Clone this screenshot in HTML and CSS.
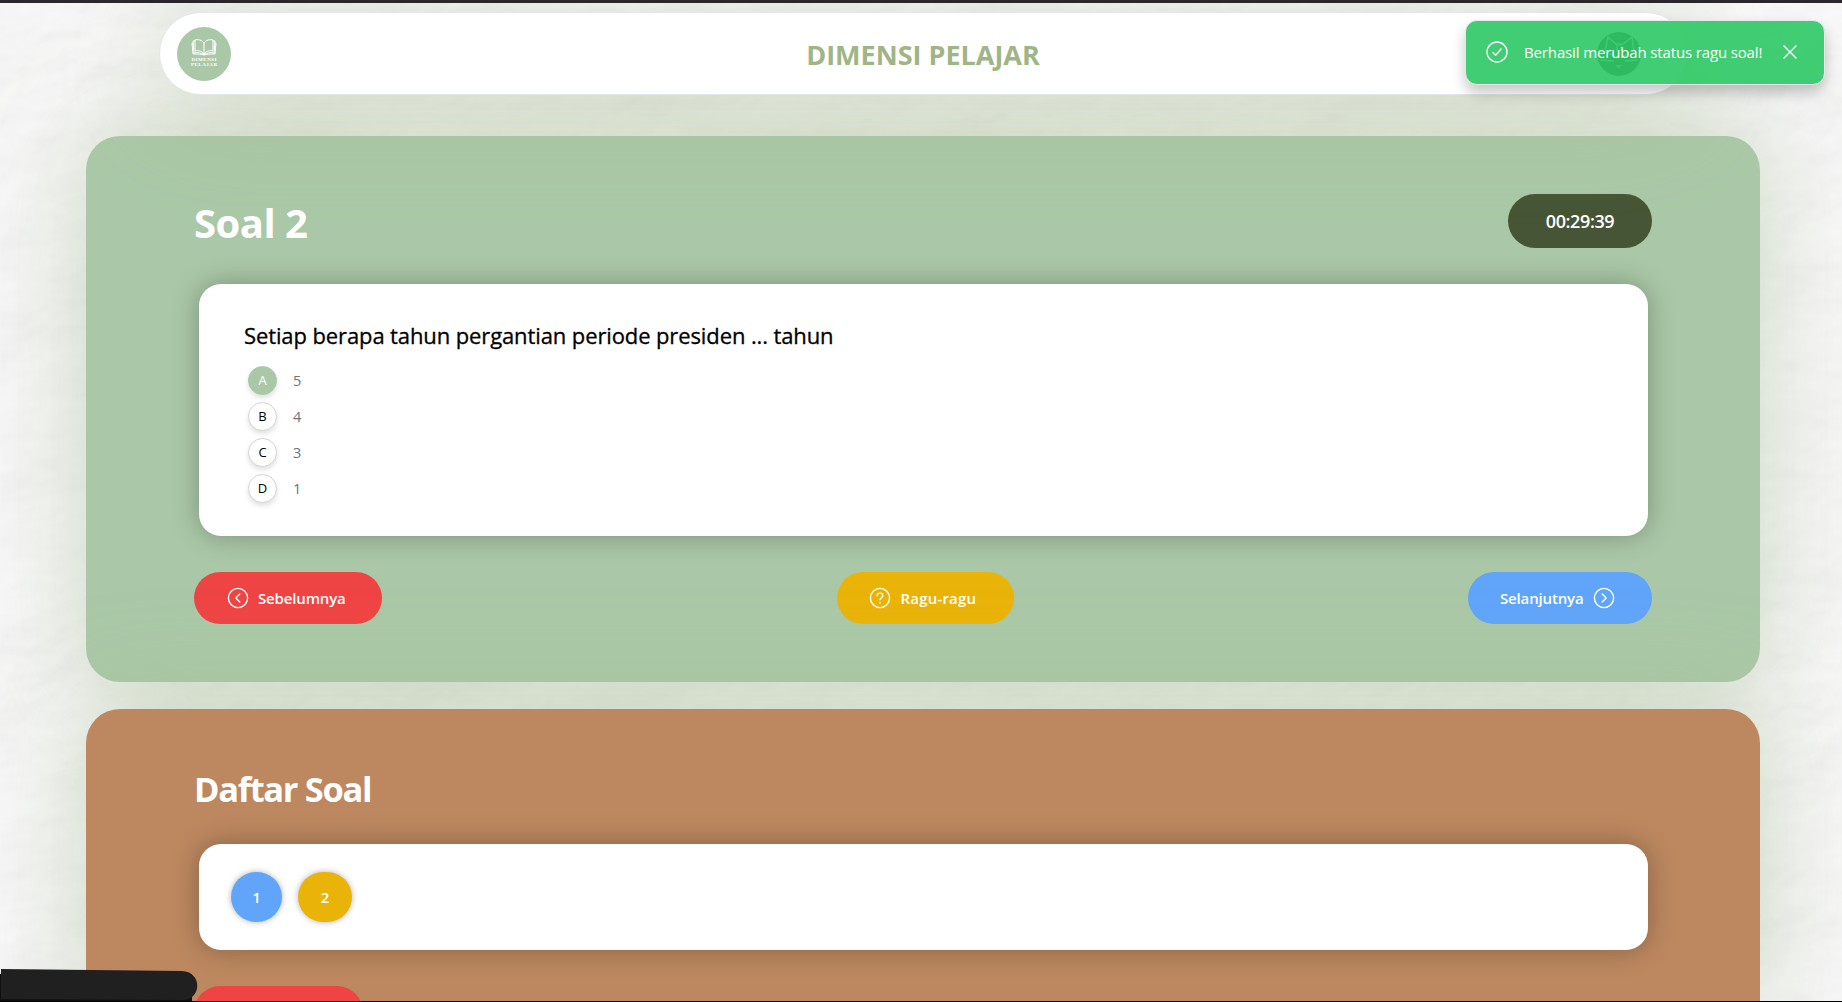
FILE: index.html
```html
<!DOCTYPE html>
<html lang="id">
<head>
<meta charset="utf-8">
<title>Dimensi Pelajar</title>
<link rel="stylesheet" href="styles.css">
</head>
<body>
<svg class="paper" aria-hidden="true">
  <filter id="grain" x="0" y="0" width="100%" height="100%">
    <feTurbulence type="fractalNoise" baseFrequency="0.005 0.007" numOctaves="5" seed="8" result="n"/>
    <feDiffuseLighting in="n" surfaceScale="7" diffuseConstant="1.12" lighting-color="#f8f8f8">
      <feDistantLight azimuth="60" elevation="62"/>
    </feDiffuseLighting>
    <feGaussianBlur stdDeviation="0.800"/>
  </filter>
  <rect width="100%" height="100%" filter="url(#grain)"/>
</svg>
<div class="topline"></div>
<header class="navbar">
  <div class="logo">
    <svg viewBox="0 0 54 54">
      <g fill="none" stroke="#fff" stroke-width="1">
        <path d="M27 16c-2-3-6-4-9-3v11c3-1 7 0 9 3 2-3 6-4 9-3V13c-3-1-7 0-9 3v11"/>
        <path d="M18 14h-2l1 12c4-1 7 0 10 1.500 3-1.500 6-2.500 10-1.500l1-12h-2M16 16h-1l1 11c5 0 8 0 11 1 3-1 6-1 11-1l1-11h-1"/>
      </g>
      <text x="27" y="33.800" text-anchor="middle" textLength="25">DIMENSI</text>
      <text x="27" y="39" text-anchor="middle" textLength="26">PELAJAR</text>
    </svg>
  </div>
  <h1>DIMENSI PELAJAR</h1>
  <div class="avatar"><svg viewBox="0 0 44 44"><path d="M8 20 11 5l8 7h7l9-7 2 16M13 22l6 3M31 22l-6 3M4 28l12 1M28 29l12-1M20 13v6M24 13v6" fill="none" stroke="#ddd" stroke-width="1.500"/><path d="M18 33h7l-3 4z" fill="#f99"/></svg></div>
</header>
<main>
  <section class="panel question">
    <div class="head"><h2>Soal 2</h2><div class="timer">00:29:39</div></div>
    <div class="card">
      <p class="ask">Setiap berapa tahun pergantian periode presiden ... tahun</p>
      <ul>
        <li><b class="on">A</b><i>5</i></li>
        <li><b>B</b><i>4</i></li>
        <li><b>C</b><i>3</i></li>
        <li><b>D</b><i>1</i></li>
      </ul>
    </div>
    <div class="actions">
      <button class="red"><svg viewBox="0 0 22 22"><circle cx="11" cy="11" r="9.600"/><path d="m12.800 7-4 4 4 4"/></svg><span>Sebelumnya</span></button>
      <button class="amber"><svg viewBox="0 0 22 22"><circle cx="11" cy="11" r="9.600"/><path d="M8.200 8.700c0-3.600 5.600-3.300 5.600 0 0 2-2.800 2-2.800 4.100M11 15.800v.1"/></svg><span>Ragu-ragu</span></button>
      <button class="blue"><span>Selanjutnya</span><svg viewBox="0 0 22 22"><circle cx="11" cy="11" r="9.600"/><path d="m9.200 7 4 4-4 4"/></svg></button>
    </div>
  </section>
  <section class="panel list">
    <h2>Daftar Soal</h2>
    <div class="card numbers"><button class="n1">1</button><button class="n2">2</button></div>
    <div class="finish"></div>
  </section>
</main>
<div class="toast">
  <svg viewBox="0 0 22 22"><circle cx="11" cy="11" r="10"/><path d="m7 11.500 2.700 2.700L15 8"/></svg>
  <span>Berhasil merubah status ragu soal!</span>
  <svg class="close" viewBox="0 0 14 14"><path d="m1 1 12 12M13 1 1 13"/></svg>
</div>
<svg class="blob" viewBox="0 0 198 33"><path d="M0 5h192v28H0z" fill="#111"/><path d="M1 0 182 2c20 1 20 27 2 29L1 30z" fill="#202020"/></svg>
<div class="baseline"></div>
</body>
</html>
```
FILE: styles.css
```css
* { box-sizing: border-box; }
html, body { height: 100%; }
body { margin: 0; overflow: hidden; position: relative; font-family: "Open Sans", "Noto Sans", sans-serif; color: #fff; background: #f5f5f5; }
h1, h2, p, ul { margin: 0; padding: 0; }
button { border: 0; font: inherit; color: inherit; padding: 0; }
.paper { position: absolute; inset: 0; width: 100%; height: 100%; opacity: .42; }
.topline { position: relative; z-index: 4; height: 3px; background: #29272c; }
.navbar { position: relative; z-index: 2; margin: 9px 0 0 159px; width: 1529px; height: 83px; border: 1px solid #e3e6ea; border-radius: 42px; background: #fff; display: grid; grid-template-columns: 54px 1fr 44px; align-items: center; padding: 0 46px 0 17px; box-shadow: 0 12px 100px rgba(165,184,138,.48); }
.logo, .logo svg { width: 54px; height: 54px; display: block; }
.logo { border-radius: 50%; background: #aac8a7; }
.logo text { font: 700 5px "Liberation Serif", serif; fill: #fff; }
h1 { text-align: center; font-size: 27px; font-weight: 700; line-height: 36px; color: #9fb585; padding: 2px 0 0 18px; }
.avatar { width: 44px; height: 44px; border-radius: 50%; background: #333; }
.avatar svg { display: block; }
main { padding: 41px 82px 0 86px; display: flex; flex-direction: column; gap: 27px; }
.panel { position: relative; border-radius: 34px; padding: 58px 108px 0; box-shadow: 0 0 100px rgba(165,188,145,.55); }
.question { height: 546px; background: #aac8a7; }
.list { height: 293px; overflow: hidden; background: #bd8860; padding-top: 58px; border-radius: 34px 34px 0 0; }
.head { display: flex; justify-content: space-between; align-items: flex-start; height: 90px; }
h2 { font-size: 40px; line-height: 58px; font-weight: 700; letter-spacing: -.5px; }
.list h2 { font-size: 34.5px; line-height: 44px; height: 77px; letter-spacing: -1.35px; }
.timer { width: 144px; height: 54px; border-radius: 27px; background: #465535; font-size: 18px; font-weight: 600; letter-spacing: -.4px; display: grid; place-items: center; }
.card { margin: 0 4px 0 5px; height: 252px; border-radius: 22px; background: #fff; box-shadow: 0 0 28px rgba(0,0,0,.29); padding: 33px 45px; color: #000; }
.ask { font-size: 22px; line-height: 36px; letter-spacing: -.11px; -webkit-text-stroke: .3px #000; margin-bottom: 9px; }
ul { list-style: none; padding-left: 4px; }
li { display: flex; align-items: center; height: 36px; gap: 16px; }
li b { width: 29px; height: 29px; border-radius: 50%; border: 1px solid #d1d5db; background: #fff; display: grid; place-items: center; font-size: 13px; font-weight: 400; box-shadow: 0 3px 5px rgba(0,0,0,.12); }
li b.on { background: #aac8a7; color: #fff; border-color: #aac8a7; }
li i { font-style: normal; font-size: 14.5px; color: #6b7280; }
.actions { display: flex; justify-content: space-between; margin-top: 36px; }
.actions button { height: 52px; border-radius: 26px; display: flex; align-items: center; gap: 9px; font-size: 15px; font-weight: 600; letter-spacing: -.15px; }
svg { fill: none; stroke-linecap: round; stroke-linejoin: round; }
.actions svg, .toast svg { stroke: #fff; stroke-width: 1.400; width: 22px; height: 22px; flex: none; }
.actions .red { width: 188px; padding-left: 33px; background: #ef4444; }
.actions .amber { width: 177px; padding-left: 32px; gap: 10px; letter-spacing: .2px; background: #eab308; }
.actions .blue { width: 184px; padding-left: 32px; background: #60a5fa; }
.numbers { height: 106px; padding: 28px 32px; display: flex; gap: 16px; }
.numbers button { height: 50px; border-radius: 27px; font-size: 15px; font-weight: 600; color: #fff; box-shadow: 0 0 6px rgba(0,0,0,.3); }
.numbers .n1 { width: 51px; background: #60a5fa; }
.numbers .n2 { width: 54px; background: #eab308; }
.finish { margin-top: 36px; width: 169px; height: 52px; border-radius: 26px; background: #ef4444; }
.toast { position: absolute; z-index: 5; left: 1465px; top: 20px; width: 360px; height: 65px; border: 1px solid #e5e7eb; border-radius: 12px; background: rgba(46,200,101,.91); box-shadow: 0 8px 14px rgba(0,0,0,.22); display: flex; align-items: center; padding: 0 0 1px 20px; font-size: 15px; letter-spacing: -.14px; white-space: nowrap; }
.toast span { margin-left: 16px; width: 238px; }
.toast .close { width: 14px; height: 14px; margin-left: 21px; }
.blob { position: absolute; z-index: 6; left: 0; top: 969px; width: 198px; height: 33px; }
.baseline { position: absolute; z-index: 7; left: 0; right: 0; top: 1001px; height: 1px; background: #000; }
```
